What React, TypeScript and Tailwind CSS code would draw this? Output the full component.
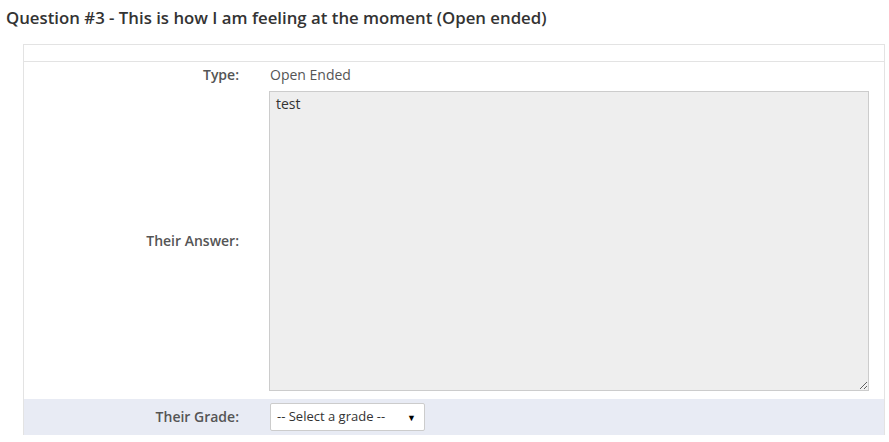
export default function App() {
  return (
    <div className="w-[889px] h-[442px] bg-white overflow-hidden font-['Open_Sans',sans-serif] text-[#333]">
      <h3 className="pl-[6px] pt-[7px] text-[16.8px] leading-[22px] font-semibold text-[#333]">
        Question #3 - This is how I am feeling at the moment (Open ended)
      </h3>
      <div className="ml-[23px] mt-[15px] w-[862px] border border-[#e3e3e3] border-b-0">
        <div className="h-[17px] border-b border-[#e3e3e3]"></div>
        <div className="flex pt-[3px]">
          <div className="w-[230px] pr-[15px] text-right text-[14px] leading-[20px] font-semibold text-[#555]">Type:</div>
          <div className="pl-[16px] text-[14px] leading-[20px] text-[#555]">Open Ended</div>
        </div>
        <div className="flex items-center pt-[6px] pb-[8px]">
          <div className="w-[230px] pr-[15px] text-right text-[14px] leading-[20px] font-semibold text-[#555]">Their Answer:</div>
          <div className="pl-[15px]">
            <textarea
              readOnly
              defaultValue="test"
              className="block w-[600px] h-[300px] bg-[#eeeeee] border border-[#cccccc] px-[6px] py-[2px] text-[14px] leading-[20px] text-[#333] outline-none"
            />
          </div>
        </div>
        <div className="flex items-center h-[36px] bg-[#e8ebf4]">
          <div className="w-[230px] pr-[15px] text-right text-[14px] leading-[20px] font-semibold text-[#555]">Their Grade:</div>
          <div className="pl-[16px]">
            <div className="flex items-center justify-between w-[155px] h-[28px] bg-white border border-[#cccccc] rounded-[2px] pl-[6px] pr-[8px] text-[13px] text-[#333]">
              <span>-- Select a grade --</span>
              <span className="text-[9px] leading-none text-black">▼</span>
            </div>
          </div>
        </div>
      </div>
    </div>
  );
}
